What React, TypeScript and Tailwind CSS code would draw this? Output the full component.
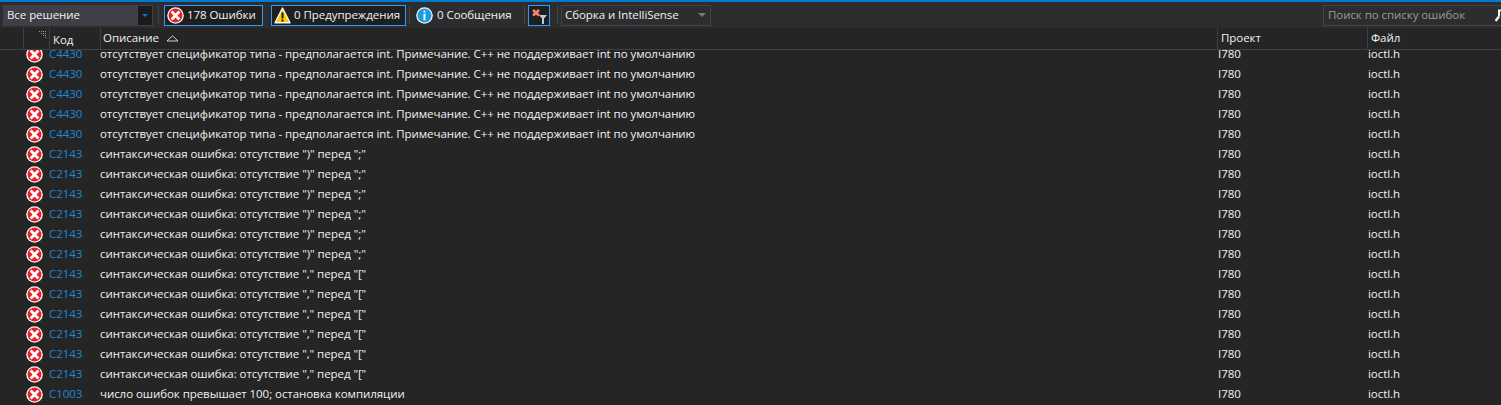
import React from "react";

const font = "font-['Open_Sans','Noto_Sans',sans-serif]";

function ErrIcon() {
  return (
    <svg width="17" height="17" viewBox="0 0 17 17" className="shrink-0">
      <circle cx="8.5" cy="8.5" r="8.3" fill="#f6f6f6" />
      <circle cx="8.5" cy="8.5" r="6.9" fill="#e51f26" />
      <path d="M5.6 5.6l5.8 5.8M11.4 5.6l-5.8 5.8" stroke="#fff" strokeWidth="2.8" strokeLinecap="square" />
    </svg>
  );
}

function WarnIcon() {
  return (
    <svg width="17" height="17" viewBox="0 0 17 17" className="shrink-0">
      <path d="M8.5 1L16 15.8H1z" fill="#ffcc00" stroke="#f6f6f6" strokeWidth="1.4" strokeLinejoin="round" />
      <path d="M7.5 5.5h2v6h-2zM7.5 12.5h2v2h-2z" fill="#1e1e1e" />
    </svg>
  );
}

function InfoIcon() {
  return (
    <svg width="17" height="17" viewBox="0 0 17 17" className="shrink-0">
      <circle cx="8.5" cy="8.5" r="8.3" fill="#f6f6f6" />
      <circle cx="8.5" cy="8.5" r="7" fill="#1b9ce2" />
      <path d="M7.5 3.4h2v2h-2zM7.5 6.8h2v6.4h-2z" fill="#fff" />
    </svg>
  );
}

function FilterIcon() {
  return (
    <svg width="20" height="19" viewBox="0 0 20 19">
      <path d="M4 4l6 5.5M10 4l-6 5.5" stroke="#f48771" strokeWidth="2.6" />
      <path d="M10 9h8l-3 3.4V18h-2v-5.6z" fill="#c8c8c8" />
    </svg>
  );
}

function Sep() {
  return <div className="w-px h-[18px] bg-[#46464a] shrink-0" />;
}

type Row = [string, string];
const A = "отсутствует спецификатор типа - предполагается int. Примечание. C++ не поддерживает int по умолчанию";
const B = 'синтаксическая ошибка: отсутствие ")" перед ";"';
const C = 'синтаксическая ошибка: отсутствие "," перед "["';
const rows: Row[] = [
  ...Array(5).fill(["C4430", A]),
  ...Array(6).fill(["C2143", B]),
  ...Array(6).fill(["C2143", C]),
  ["C1003", "число ошибок превышает 100; остановка компиляции"],
];

export default function App() {
  return (
    <div className={`w-[1501px] h-[405px] bg-[#252526] text-[#f1f1f1] text-[11.5px] tracking-[-0.06px] overflow-hidden flex flex-col ${font}`}>
      <div className="h-[2px] bg-[#007acc] shrink-0" />
      <div className="h-[26px] bg-[#2d2d30] flex items-center shrink-0 pl-[3px]">
        <div className="w-[150px] h-[21px] bg-[#3f3f46] flex items-center justify-between shrink-0">
          <span className="pl-[4px]">Все решение</span>
          <div className="w-[14px] h-[19px] mr-px bg-[#1b1b1c] flex items-center justify-center">
            <div className="w-0 h-0 border-x-[3px] border-x-transparent border-t-[3px] border-t-[#007acc]" />
          </div>
        </div>
        <div className="w-[5px]" />
        <Sep />
        <div className="w-[5px]" />
        <div className="w-[99px] h-[21px] border border-[#3399ff] bg-[#1f1f20] flex items-center pl-[2px] gap-[3px] shrink-0">
          <ErrIcon />
          <span className="whitespace-nowrap">178 Ошибки</span>
        </div>
        <div className="w-[8px]" />
        <div className="w-[135px] h-[21px] border border-[#3399ff] bg-[#1f1f20] flex items-center pl-[2px] gap-[3px] shrink-0">
          <WarnIcon />
          <span className="whitespace-nowrap">0 Предупреждения</span>
        </div>
        <div className="w-[3px]" />
        <Sep />
        <div className="w-[6px]" />
        <InfoIcon />
        <span className="ml-[4px] w-[87px] shrink-0 whitespace-nowrap">0 Сообщения</span>
        <Sep />
        <div className="w-[3px]" />
        <div className="w-[22px] h-[21px] border border-[#3399ff] bg-[#1f1f20] flex items-center justify-center shrink-0">
          <FilterIcon />
        </div>
        <div className="w-[7px]" />
        <Sep />
        <div className="w-[3px]" />
        <div className="w-[150px] h-[21px] border border-[#434346] flex items-center justify-between pl-[3px] pr-[4px] shrink-0">
          <span className="whitespace-nowrap">Сборка и IntelliSense</span>
          <div className="w-0 h-0 border-x-[4px] border-x-transparent border-t-[4px] border-t-[#777777]" />
        </div>
        <div className="flex-1" />
        <div className="w-[178px] h-[21px] bg-[#2d2d30] border border-[#434346] border-r-0 flex items-center justify-between pl-[4px] shrink-0">
          <span className="text-[#999999] whitespace-nowrap">Поиск по списку ошибок</span>
          <svg width="6" height="14" viewBox="0 0 6 14" className="shrink-0">
            <path d="M0.5 13L4 8.5" stroke="#f0f0f0" strokeWidth="2.4" />
            <path d="M4 8.5V2.5h2" stroke="#f0f0f0" strokeWidth="2" fill="none" />
          </svg>
        </div>
      </div>

      <div className="h-[22px] bg-[#252526] border-b border-[#3f3f46] flex shrink-0 relative z-10">
        <div className="w-[23px] shrink-0" />
        <div className="w-[26px] shrink-0 border-l border-[#3f3f46] relative">
          <svg width="8" height="7" viewBox="0 0 8 7" className="absolute right-[2px] top-[3px]">
            <path d="M0 0h1v1H0zM2 0h1v1H2zM4 0h1v1H4zM6 0h1v1H6zM2 2h1v1H2zM4 2h1v1H4zM6 2h1v1H6zM4 4h1v1H4zM6 4h1v1H6zM6 6h1v1H6z" fill="#999999" />
          </svg>
        </div>
        <div className="w-[51px] shrink-0 border-l border-[#3f3f46] pl-[3px] pt-[3px]">Код</div>
        <div className="w-[1117px] shrink-0 border-l border-[#3f3f46] pl-[2px] pt-px flex items-start gap-[7px]">
          <span>Описание</span>
          <svg width="13" height="7" viewBox="0 0 13 7" className="mt-[6px]">
            <path d="M6.5.8L12 6H1z" fill="none" stroke="#d0d0d0" />
          </svg>
        </div>
        <div className="w-[150px] shrink-0 border-l border-[#3f3f46] pl-[3px] pt-px">Проект</div>
        <div className="flex-1 border-l border-[#3f3f46] pl-[3px] pt-px">Файл</div>
      </div>

      <div className="flex-1 overflow-hidden min-h-0">
        <div className="mt-[-6px]">
          {rows.map(([code, text], i) => (
            <div key={i} className="h-[20px] flex items-center">
              <div className="w-[26px] shrink-0" />
              <div className="w-[23px] shrink-0 flex items-center"><ErrIcon /></div>
              <div className="w-[51px] shrink-0 text-[#1e88d8]">{code}</div>
              <div className="w-[1118px] shrink-0 whitespace-nowrap">{text}</div>
              <div className="w-[150px] shrink-0">I780</div>
              <div>ioctl.h</div>
            </div>
          ))}
        </div>
      </div>
    </div>
  );
}
